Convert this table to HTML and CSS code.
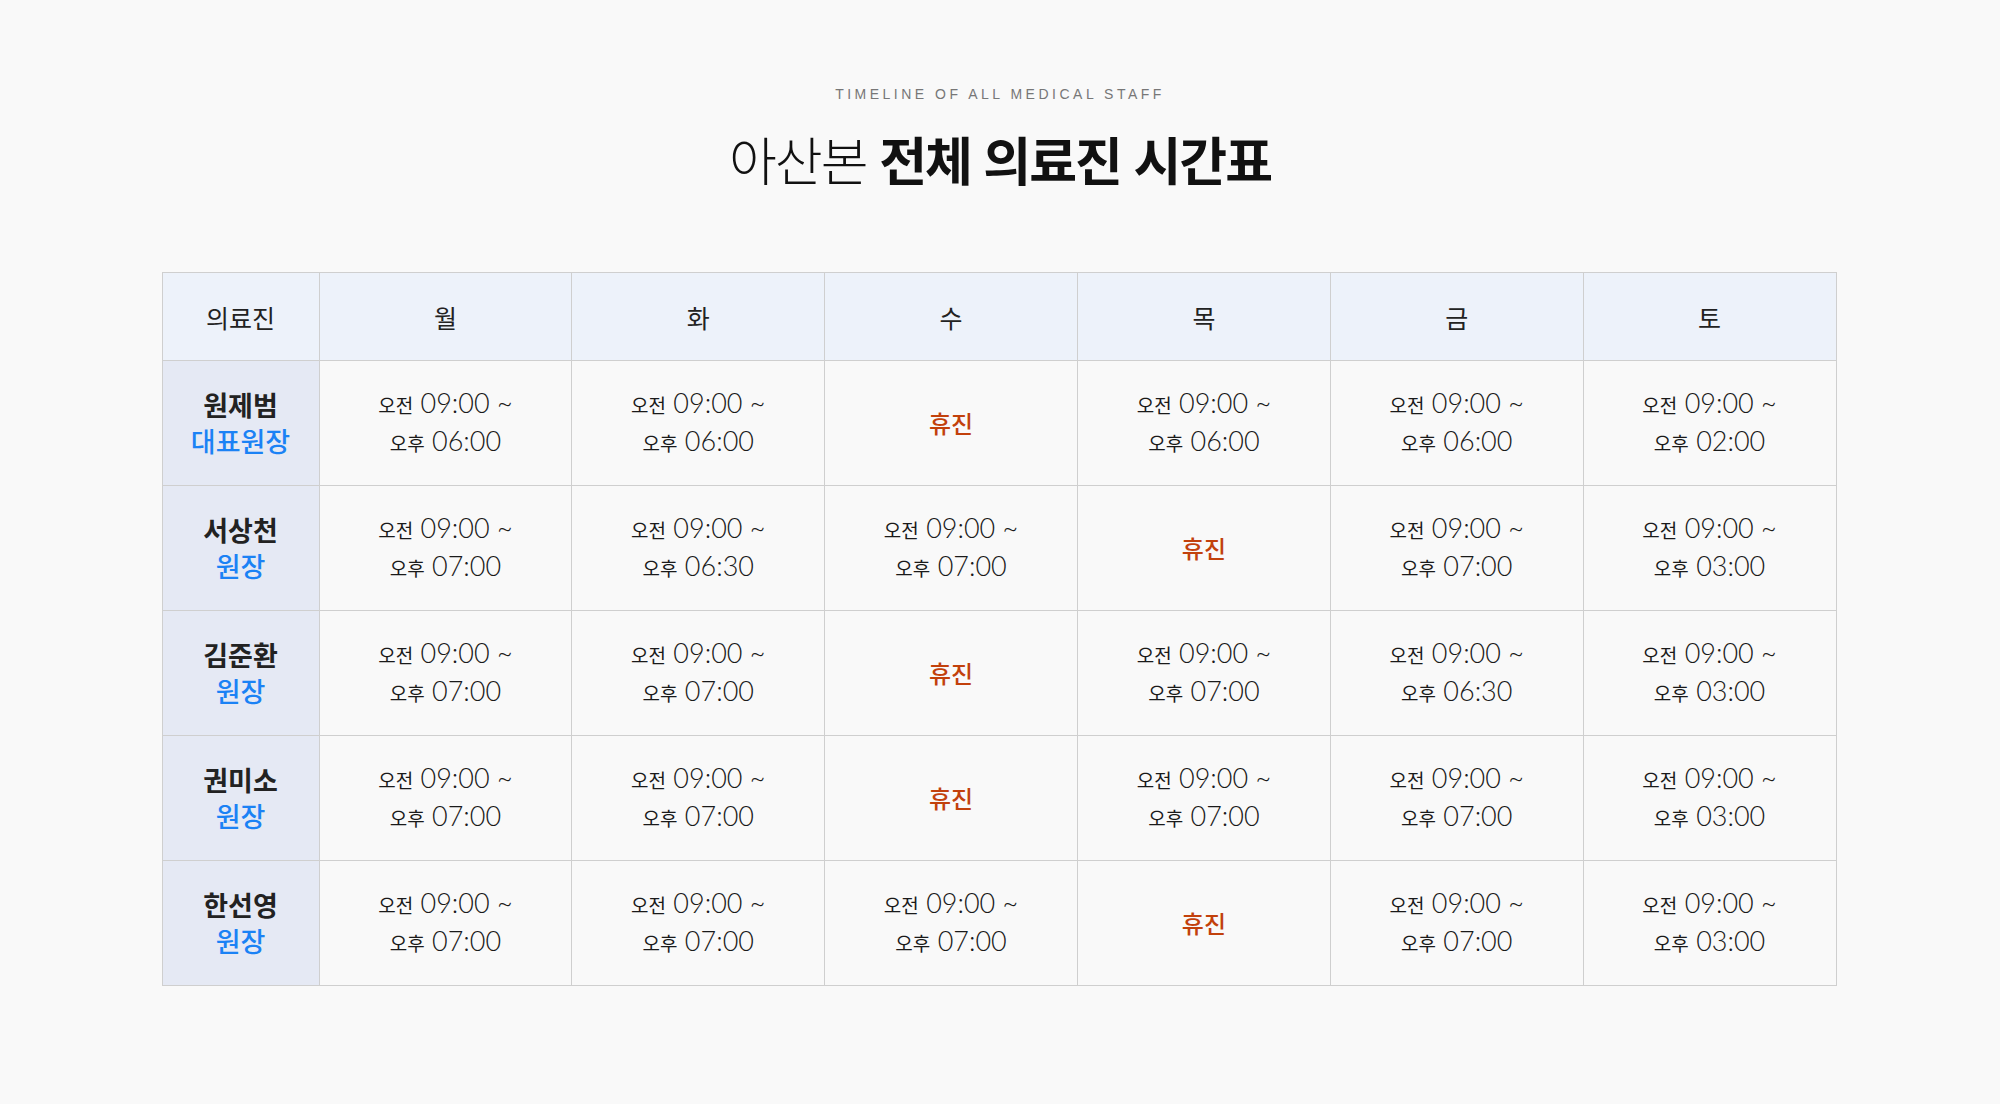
FILE: index.html
```html
<!DOCTYPE html>
<html lang="ko">
<head>
<meta charset="utf-8">
<title>아산본 전체 의료진 시간표</title>
<link rel="stylesheet" href="styles.css">
</head>
<body>
<main class="page">
  <header class="head">
    <p class="eyebrow">TIMELINE OF ALL MEDICAL STAFF</p>
    <h1 class="title"><span class="thin">아산본</span> <strong>전체 의료진 시간표</strong></h1>
  </header>
  <table class="schedule">
    <thead>
      <tr>
        <th class="c-staff">의료진</th>
        <th>월</th><th>화</th><th>수</th><th>목</th><th>금</th><th>토</th>
      </tr>
    </thead>
    <tbody>
      <tr>
        <th class="staff"><span class="name">원제범</span><span class="role">대표원장</span></th>
        <td><span class="ap">오전</span> 09:00 ~<br><span class="ap">오후</span> 06:00</td>
        <td><span class="ap">오전</span> 09:00 ~<br><span class="ap">오후</span> 06:00</td>
        <td class="off">휴진</td>
        <td><span class="ap">오전</span> 09:00 ~<br><span class="ap">오후</span> 06:00</td>
        <td><span class="ap">오전</span> 09:00 ~<br><span class="ap">오후</span> 06:00</td>
        <td><span class="ap">오전</span> 09:00 ~<br><span class="ap">오후</span> 02:00</td>
      </tr>
      <tr>
        <th class="staff"><span class="name">서상천</span><span class="role">원장</span></th>
        <td><span class="ap">오전</span> 09:00 ~<br><span class="ap">오후</span> 07:00</td>
        <td><span class="ap">오전</span> 09:00 ~<br><span class="ap">오후</span> 06:30</td>
        <td><span class="ap">오전</span> 09:00 ~<br><span class="ap">오후</span> 07:00</td>
        <td class="off">휴진</td>
        <td><span class="ap">오전</span> 09:00 ~<br><span class="ap">오후</span> 07:00</td>
        <td><span class="ap">오전</span> 09:00 ~<br><span class="ap">오후</span> 03:00</td>
      </tr>
      <tr>
        <th class="staff"><span class="name">김준환</span><span class="role">원장</span></th>
        <td><span class="ap">오전</span> 09:00 ~<br><span class="ap">오후</span> 07:00</td>
        <td><span class="ap">오전</span> 09:00 ~<br><span class="ap">오후</span> 07:00</td>
        <td class="off">휴진</td>
        <td><span class="ap">오전</span> 09:00 ~<br><span class="ap">오후</span> 07:00</td>
        <td><span class="ap">오전</span> 09:00 ~<br><span class="ap">오후</span> 06:30</td>
        <td><span class="ap">오전</span> 09:00 ~<br><span class="ap">오후</span> 03:00</td>
      </tr>
      <tr>
        <th class="staff"><span class="name">권미소</span><span class="role">원장</span></th>
        <td><span class="ap">오전</span> 09:00 ~<br><span class="ap">오후</span> 07:00</td>
        <td><span class="ap">오전</span> 09:00 ~<br><span class="ap">오후</span> 07:00</td>
        <td class="off">휴진</td>
        <td><span class="ap">오전</span> 09:00 ~<br><span class="ap">오후</span> 07:00</td>
        <td><span class="ap">오전</span> 09:00 ~<br><span class="ap">오후</span> 07:00</td>
        <td><span class="ap">오전</span> 09:00 ~<br><span class="ap">오후</span> 03:00</td>
      </tr>
      <tr>
        <th class="staff"><span class="name">한선영</span><span class="role">원장</span></th>
        <td><span class="ap">오전</span> 09:00 ~<br><span class="ap">오후</span> 07:00</td>
        <td><span class="ap">오전</span> 09:00 ~<br><span class="ap">오후</span> 07:00</td>
        <td><span class="ap">오전</span> 09:00 ~<br><span class="ap">오후</span> 07:00</td>
        <td class="off">휴진</td>
        <td><span class="ap">오전</span> 09:00 ~<br><span class="ap">오후</span> 07:00</td>
        <td><span class="ap">오전</span> 09:00 ~<br><span class="ap">오후</span> 03:00</td>
      </tr>
    </tbody>
  </table>
</main>
</body>
</html>
```
FILE: styles.css
```css
html, body {
  margin: 0;
  padding: 0;
  background: #f9f9f9;
}
body {
  font-family: "Noto Sans CJK KR", "Noto Sans", sans-serif;
  color: #222;
}
.page {
  display: flex;
  flex-direction: column;
  align-items: center;
  padding-top: 84px;
}
.head {
  text-align: center;
  margin-bottom: 78px;
}
.eyebrow {
  margin: 0;
  font-family: "Liberation Sans", "Noto Sans", sans-serif;
  font-size: 14px;
  line-height: 20px;
  letter-spacing: 3.5px;
  color: #777;
}
.title {
  margin: 20px 0 0;
  font-size: 52px;
  line-height: 70px;
  font-weight: 400;
  color: #111;
  letter-spacing: -2px;
}
.title .thin {
  font-weight: 300;
}
.title strong {
  font-weight: 700;
}
.schedule {
  border-collapse: collapse;
  width: 1675px;
  table-layout: fixed;
  margin-right: 2px;
}
.schedule th, .schedule td {
  border: 1px solid #cfcfcf;
  text-align: center;
  vertical-align: middle;
  padding: 0;
}
.schedule thead th {
  height: 87px;
  background: #edf2fa;
  font-size: 25px;
  font-weight: 400;
  color: #222;
}
.schedule thead th.c-staff {
  width: 156px;
}
.schedule tbody tr {
  height: 125px;
}
.schedule tbody td {
  font-family: "Lato", "Noto Sans CJK KR", sans-serif;
  font-weight: 300;
  font-size: 27px;
  line-height: 36px;
  color: #1a1a1a;
}
.ap {
  font-family: "Noto Sans CJK KR", sans-serif;
  font-weight: 400;
  font-size: 19px;
}
.schedule td.off {
  font-family: "Noto Sans CJK KR", sans-serif;
  font-weight: 500;
  font-size: 24px;
  color: #c2410c;
}
.staff {
  background: #e5e9f4;
}
.name, .role {
  display: block;
  font-size: 27px;
  line-height: 36px;
}
.name {
  font-weight: 700;
  color: #222;
}
.role {
  font-weight: 500;
  color: #1b82f5;
}
```
